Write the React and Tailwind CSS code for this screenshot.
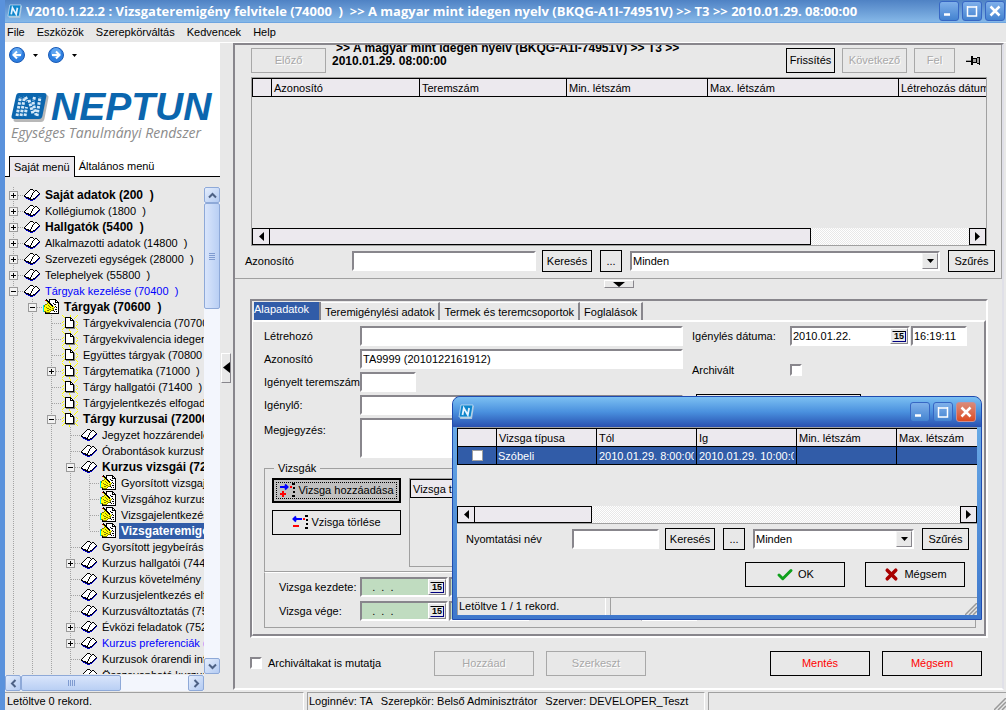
import { Check, X } from 'lucide-react';

const TREE = [
  { level: 0, icon: 'book', text: 'Saját adatok (200  )', toggle: '+', bold: true },
  { level: 0, icon: 'book', text: 'Kollégiumok (1800  )', toggle: '+' },
  { level: 0, icon: 'book', text: 'Hallgatók (5400  )', toggle: '+', bold: true },
  { level: 0, icon: 'book', text: 'Alkalmazotti adatok (14800  )', toggle: '+' },
  { level: 0, icon: 'book', text: 'Szervezeti egységek (28000  )', toggle: '+' },
  { level: 0, icon: 'book', text: 'Telephelyek (55800  )', toggle: '+' },
  { level: 0, icon: 'book', text: 'Tárgyak kezelése (70400  )', toggle: '-', blue: true },
  { level: 1, icon: 'hand', text: 'Tárgyak (70600  )', toggle: '-', bold: true },
  { level: 2, icon: 'page', text: 'Tárgyekvivalencia (70700  )' },
  { level: 2, icon: 'page', text: 'Tárgyekvivalencia idegen' },
  { level: 2, icon: 'page', text: 'Együttes tárgyak (70800  )' },
  { level: 2, icon: 'page', text: 'Tárgytematika (71000  )', toggle: '+' },
  { level: 2, icon: 'page', text: 'Tárgy hallgatói (71400  )' },
  { level: 2, icon: 'page', text: 'Tárgyjelentkezés elfogadása' },
  { level: 2, icon: 'page', text: 'Tárgy kurzusai (72000  )', toggle: '-', bold: true },
  { level: 3, icon: 'book', text: 'Jegyzet hozzárendelés' },
  { level: 3, icon: 'book', text: 'Órabontások kurzushoz' },
  { level: 3, icon: 'book', text: 'Kurzus vizsgái (72', toggle: '-', bold: true },
  { level: 4, icon: 'hand', text: 'Gyorsított vizsgajelentkezés' },
  { level: 4, icon: 'hand', text: 'Vizsgához kurzus' },
  { level: 4, icon: 'hand', text: 'Vizsgajelentkezés' },
  { level: 4, icon: 'hand', text: 'Vizsgateremigény', bold: true, selected: true, last: true },
  { level: 3, icon: 'book', text: 'Gyorsított jegybeírás' },
  { level: 3, icon: 'book', text: 'Kurzus hallgatói (74400  )', toggle: '+' },
  { level: 3, icon: 'book', text: 'Kurzus követelmény e' },
  { level: 3, icon: 'book', text: 'Kurzusjelentkezés elfogadása' },
  { level: 3, icon: 'book', text: 'Kurzusváltoztatás (75' },
  { level: 3, icon: 'book', text: 'Évközi feladatok (752', toggle: '+' },
  { level: 3, icon: 'book', text: 'Kurzus preferenciák (', toggle: '+', blue: true },
  { level: 3, icon: 'book', text: 'Kurzusok órarendi információi' },
  { level: 3, icon: 'book', text: 'Összevonható kurzusok' },
];

const PALETTE = { K: '#000000', W: '#ffffff', B: '#0000c8', Y: '#ffff00', G: '#808080', C: '#00e5ee', O: '#808000', R: '#d00000' };

// 16x16 tree glyphs, one letter per pixel
const GLYPHS = {
  book: [
    '................',
    '................',
    '......KKK.......',
    '.....KWWWK.KK...',
    '....KWWWWWKWWK..',
    '...KWWWWWKWWWWK.',
    '..KWWWWWKWWWWWWK',
    '.KWWWWWWKWWWWWKB',
    'KWWWWWWKWWWWWKB.',
    'KKWWWWWKWWWWKB..',
    '.BKKKWKWWWWKB...',
    '..BBKKKWWKKB....',
    '....BBKKKBB.....',
    '......BBB.......',
    '................',
    '................',
  ],
  page: [
    'Y.......Y......Y',
    '.Y......Y.....Y.',
    '..YKKKKKK....Y..',
    '...KWWWWKK..Y...',
    '...KWWWWKWK.....',
    '...KWWWWKKKK....',
    '.Y.KWWWWWWWKG.Y.',
    'Y..KWWWWWWWKG..Y',
    '...KWWWWWWWKG...',
    '.Y.KWWWWWWWKG..Y',
    'Y..KWWWWWWWKG.Y.',
    '...KWWWWWWWKG...',
    '..YKKKKKKKKKGY..',
    '.Y..GGGGGGGGG.Y.',
    'Y......Y.......Y',
    '.......Y........',
  ],
  hand: [
    '...K..KKKKKKK...',
    '..RKK.KWWWWWKK..',
    '...YKKKWWWWWKWK.',
    '....YKKWWWWWKKKK',
    '....OYKKWWKWWWWK',
    '..OOYYYKKWWKKWWK',
    'COYYYOYYKKWWWWWK',
    'COYYYYOYYKYWKWWK',
    'CYYOYYYOYYYOWKWK',
    'CYYYOOYYYOOWWWWK',
    'CYYYYYOOYYOWKKWK',
    'CYYYOOYYOOKWWWWK',
    'COOYYYYOWWWKWKWK',
    '..KOOOOWWWWWWWWK',
    '..KKKKKKKKKKKKKK',
    '................',
  ],
};

const Glyph = ({ name }) => (
  <svg width="16" height="16" viewBox="0 0 16 16" shapeRendering="crispEdges" className="block shrink-0">
    {GLYPHS[name].map((row, y) =>
      [...row].map((c, x) => c !== '.' && <rect key={`${x}-${y}`} x={x} y={y} width="1" height="1" fill={PALETTE[c]} />)
    )}
  </svg>
);

const Guide = ({ own, last, toggle }) => (
  <svg width="19" height="16" viewBox="0 0 19 16" className="block shrink-0">
    <path d={last ? 'M8.500 0v8' : 'M8.500 0v16'} stroke="#a4a4a4" strokeDasharray="1 1" />
    {own && <path d="M9 8.500h10" stroke="#a4a4a4" strokeDasharray="1 1" />}
    {toggle && (
      <>
        <rect x="4.500" y="4.500" width="8" height="8" fill="#f2f2f2" stroke="#9a9a9a" />
        <path d={toggle === '+' ? 'M6 8.500h5M8.500 6v5' : 'M6 8.500h5'} stroke="#000" />
      </>
    )}
  </svg>
);

const TreeRow = ({ item }) => {
  const guides = Array.from({ length: item.level + 1 }, (_, i) => i);
  return (
    <li className="flex h-4 items-center">
      {guides.map((i) => (
        <Guide
          key={i}
          own={i === item.level}
          last={i === item.level && item.last}
          toggle={i === item.level ? item.toggle : null}
        />
      ))}
      <Glyph name={item.icon} />
      <span
        className={`ml-[3px] whitespace-pre px-0.5 leading-4 ${item.bold ? 'text-[12px] font-bold' : 'text-[11px]'} ${item.blue ? 'text-[#0000ff]' : ''} ${item.selected ? 'bg-[#315ca8] text-white' : ''}`}
      >
        {item.text}
      </span>
    </li>
  );
};

const XpScrollButton = ({ label, d }) => (
  <button aria-label={label} className="flex h-4 w-4 shrink-0 items-center justify-center rounded-[2px] border border-[#8ea9d8] bg-linear-to-br from-[#e4edfc] to-[#b4cbf2]">
    <svg width="9" height="9" viewBox="0 0 9 9">
      <path d={d} fill="none" stroke="#4d6185" strokeWidth="2" />
    </svg>
  </button>
);

const NeptunBadge = ({ size }) => (
  <svg width={size} height={size} viewBox="0 0 16 16" className="shrink-0">
    <path d="M4 2h12l-2 13H2z" fill="#a9c4dc" />
    <path d="M3 1h12l-2 12H1z" fill="#0e86cc" stroke="#d5e8f7" strokeWidth=".7" />
    <path d="M4.500 11l1.300-7 4 7 1.300-7" fill="none" stroke="#e6f3ff" strokeWidth="1.800" />
  </svg>
);

const LogoMark = () => (
  <svg width="38" height="31" viewBox="0 0 38 31" className="shrink-0">
    <path d="M9 3h26q3 0 2.400 3l-4 21q-.6 3-3.500 3H5q-3 0-2.400-3L6 6q.6-3 3-3z" fill="#b8b8b8" />
    <path d="M8 1h25q3 0 2.400 3l-4 20q-.6 3-3.500 3H3q-3 0-2.400-3L5 4q.6-3 3-3z" fill="#0b66ae" />
    <path d="M6 24 9.500 5M10 24 13.500 5M14 24 15.500 15M14.500 5l2 4M18 8l4 14M22 10l3 13M23.500 5 22.500 9M26 24 29 5" stroke="#d4e8f8" strokeWidth="3" strokeDasharray="2.600 1.200" fill="none" />
  </svg>
);

const NavArrow = ({ label, d }) => (
  <button aria-label={label} className="flex items-center gap-2">
    <svg width="16" height="16" viewBox="0 0 16 16">
      <circle cx="8" cy="8" r="7.500" fill="#2f7fe0" stroke="#1b5bb5" />
      <circle cx="8" cy="6" r="5" fill="#5ea4f0" />
      <path d={d} fill="none" stroke="#fff" strokeWidth="2" />
    </svg>
    <svg width="5" height="3" viewBox="0 0 5 3">
      <path d="M0 0h5L2.500 3z" />
    </svg>
  </button>
);

const Sidebar = () => (
  <aside className="flex w-[215px] shrink-0 flex-col">
    <div className="flex flex-col bg-white">
      <div className="flex gap-2.5 px-1 pt-1">
        <NavArrow label="Vissza" d="M12 8H5M8 4.500 4.500 8 8 11.500" />
        <NavArrow label="Előre" d="M4 8h7M8 4.500 11.500 8 8 11.500" />
      </div>
      <div className="px-1.5 pt-6">
        <div className="flex items-center gap-0.5">
          <LogoMark />
          <span className="text-[39px] leading-10 font-bold text-[#0b66ae] italic">NEPTUN</span>
        </div>
        <p className="font-['Open_Sans',sans-serif] text-[14px] leading-3 whitespace-nowrap text-[#8c8c8c] italic">
          Egységes Tanulmányi Rendszer
        </p>
      </div>
      <div className="mt-[17px] flex border-b border-black pl-1 text-[11px]">
        <button className="-mb-px border border-b-0 border-black bg-[#ece9ee] px-1 py-0.5 leading-4">Saját menü</button>
        <button className="px-1 py-0.5 leading-4">Általános menü</button>
      </div>
    </div>
    <div className="flex min-h-0 flex-1 pt-2.5">
      <ul className="min-w-0 flex-1 overflow-hidden">
        {TREE.map((item) => (
          <TreeRow key={item.text} item={item} />
        ))}
      </ul>
      <div className="flex w-4 shrink-0 flex-col bg-[#f3f6fd]">
        <XpScrollButton label="Fel" d="M1 6.500 4.500 3 8 6.500" />
        <div className="flex h-[106px] flex-col items-center justify-center gap-px rounded-[2px] border border-[#8ea9d8] bg-linear-to-r from-[#d9e5fb] to-[#b9cff4]">
          <i className="h-px w-1.5 bg-[#7f9bd0]" />
          <i className="h-px w-1.5 bg-[#7f9bd0]" />
          <i className="h-px w-1.5 bg-[#7f9bd0]" />
          <i className="h-px w-1.5 bg-[#7f9bd0]" />
        </div>
        <div className="flex-1" />
        <XpScrollButton label="Le" d="M1 2.500 4.500 6 8 2.500" />
      </div>
    </div>
    <div className="flex h-[18px] items-center">
      <div className="flex flex-1 bg-[#f3f6fd]">
        <XpScrollButton label="Balra" d="M6.500 1 3 4.500 6.500 8" />
        <div className="flex w-[100px] items-center justify-center gap-px rounded-[2px] border border-[#8ea9d8] bg-linear-to-b from-[#d9e5fb] to-[#b9cff4]">
          <i className="h-1.5 w-px bg-[#7f9bd0]" />
          <i className="h-1.5 w-px bg-[#7f9bd0]" />
          <i className="h-1.5 w-px bg-[#7f9bd0]" />
          <i className="h-1.5 w-px bg-[#7f9bd0]" />
        </div>
        <div className="flex-1" />
        <XpScrollButton label="Jobbra" d="M2.500 1 6 4.500 2.500 8" />
      </div>
      <div className="w-4" />
    </div>
  </aside>
);

const FlatButton = ({ children, className = '', ...props }) => (
  <button
    className={`flex shrink-0 items-center justify-center border border-black disabled:border-[#a8a8a8] disabled:text-[#a8a8a8] disabled:[text-shadow:1px_1px_0_#fff] ${className}`}
    {...props}
  >
    {children}
  </button>
);

const SUNKEN = 'border-2 border-[#88868c] border-r-white border-b-white bg-white';

const TextInput = ({ className = '', ...props }) => (
  <input type="text" className={`h-5 px-px outline-none ${SUNKEN} ${className}`} {...props} />
);

const SelectBox = ({ label, className = '' }) => (
  <div className={`relative ${className}`}>
    <select aria-label={label} className={`h-5 w-full appearance-none px-px outline-none ${SUNKEN}`}>
      <option>Minden</option>
    </select>
    <span className="pointer-events-none absolute inset-y-0.5 right-0.5 flex w-4 items-center justify-center border border-[#f5f5f5] border-r-[#88868c] border-b-[#88868c] bg-[#e8e8e8]">
      <svg width="7" height="4" viewBox="0 0 7 4">
        <path d="M0 0h7L3.500 4z" />
      </svg>
    </span>
  </div>
);

const DateInput = ({ className = '', inputClass = '', ...props }) => (
  <div className={`flex h-5 ${SUNKEN} ${className}`}>
    <input type="text" className={`w-0 flex-1 px-px outline-none ${inputClass}`} {...props} />
    <button aria-label="Naptár" className="flex w-[18px] items-center justify-center border border-white border-r-[#88868c] border-b-[#88868c] bg-[#e8e8e8]">
      <span className="border border-t-black border-r-[#000080] border-b-[#000080] border-l-transparent px-px text-[9px] leading-[9px] font-bold">15</span>
    </button>
  </div>
);

const FlatScrollbar = ({ thumbClass }) => (
  <div className="flex h-[17px] bg-[repeating-conic-gradient(#fff_0_25%,#e8e8e8_0_50%)] bg-[length:2px_2px]">
    <button aria-label="Görgetés balra" className="flex w-[18px] items-center justify-center border border-black bg-[#ece9ee]">
      <svg width="5" height="9" viewBox="0 0 5 9">
        <path d="M5 0v9L0 4.500z" />
      </svg>
    </button>
    <div className={`border border-l-0 border-black bg-[#ece9ee] ${thumbClass}`} />
    <div className="flex-1" />
    <button aria-label="Görgetés jobbra" className="flex w-[17px] items-center justify-center border border-black bg-[#ece9ee]">
      <svg width="5" height="9" viewBox="0 0 5 9">
        <path d="M0 0v9l5-4.500z" />
      </svg>
    </button>
  </div>
);

const HeadCell = ({ children, className = '' }) => (
  <th className={`h-[18px] overflow-hidden border border-t-0 border-r-0 border-black bg-[#ece9ee] px-0.5 text-left font-normal whitespace-nowrap first:border-l-0 ${className}`}>
    {children}
  </th>
);

const RoomGrid = () => (
  <div className="flex h-[169px] flex-col border border-[#a0a0a0]">
    <div className="flex-1 overflow-hidden">
      <table className="w-full table-fixed border-collapse border-t border-l border-black leading-4">
        <thead>
          <tr>
            <HeadCell className="w-[19px]" />
            <HeadCell className="w-[148px]">Azonosító</HeadCell>
            <HeadCell className="w-[147px]">Teremszám</HeadCell>
            <HeadCell className="w-[141px]">Min. létszám</HeadCell>
            <HeadCell className="w-[191px]">Max. létszám</HeadCell>
            <HeadCell>Létrehozás dátuma</HeadCell>
          </tr>
        </thead>
      </table>
    </div>
    <FlatScrollbar thumbClass="w-[541px]" />
  </div>
);

const SearchRow = ({ label, id, className = '', labelClass, inputClass, selectClass, autoFocus }) => (
  <div className={`flex items-center ${className}`}>
    <label htmlFor={id} className={`shrink-0 ${labelClass}`}>{label}</label>
    <TextInput id={id} className={inputClass} autoFocus={autoFocus} />
    <FlatButton className="ml-1.5 h-[22px] w-[50px]">Keresés</FlatButton>
    <FlatButton className="ml-2 h-[22px] w-[22px]">...</FlatButton>
    <SelectBox label={`${label} szűrő`} className={`ml-2 ${selectClass}`} />
    <FlatButton className="ml-2 h-[22px] w-[47px]">Szűrés</FlatButton>
  </div>
);

const UpperPanel = () => (
  <section className="border-r border-b border-[#a0a0a0] pb-1.5">
    <div className="flex items-center pr-5 pl-4">
      <FlatButton disabled className="mt-[3px] h-[25px] w-[75px] self-start">Előző</FlatButton>
      <div className="ml-1.5 flex h-8 w-[360px] flex-col justify-end overflow-hidden pb-[9px] text-[12px] leading-[13px] font-bold">
        <p className="pl-1">&gt;&gt; A magyar mint idegen nyelv (BKQG-A1I-74951V) &gt;&gt; T3 &gt;&gt;</p>
        <p>2010.01.29. 08:00:00</p>
      </div>
      <div className="mt-[3px] ml-auto flex items-center gap-[7px] self-start">
        <FlatButton className="h-[25px] w-[49px]">Frissítés</FlatButton>
        <FlatButton disabled className="h-[25px] w-[65px]">Következő</FlatButton>
        <FlatButton disabled className="h-[25px] w-[41px]">Fel</FlatButton>
        <button aria-label="Rögzítés" className="ml-1">
          <svg width="15" height="9" viewBox="0 0 15 9" shapeRendering="crispEdges">
            <path d="M5 0h2v9H5zM7 2h3v1H7zM7 6h3v1H7zM10 2h1v5h-1zM11 1h2v1h-2zM11 7h2v1h-2zM13 1h1v8h-1zM0 4h5v2H0z" />
            <path d="M7 3h3v3H7zM11 2h2v5h-2z" fill="#a0a0a0" />
            <path d="M0 4h5v1H0z" fill="#a0a0a0" />
          </svg>
        </button>
      </div>
    </div>
    <div className="pr-3.5 pl-4">
      <RoomGrid />
    </div>
    <SearchRow
      label="Azonosító"
      id="room-id"
      className="mt-1 pr-1.5 pl-2.5"
      labelClass="w-[107px]"
      inputClass="w-[184px]"
      selectClass="flex-1"
    />
  </section>
);

const TABS = ['Alapadatok', 'Teremigénylési adatok', 'Termek és teremcsoportok', 'Foglalások'];

const ExamIcon = ({ add }) => (
  <svg width="17" height="15" viewBox="0 0 17 15" className="shrink-0">
    <path d={add ? 'M1 4h8M6 1.500 8.500 4 6 6.500' : 'M1 4h9M4 1.500 1.500 4 4 6.500'} fill="none" stroke="#0000ff" strokeWidth="2" />
    <path d={add ? 'M1 11h6M4 8v6' : 'M1 11h6'} stroke="#ff0000" strokeWidth="2" />
    <path d="M11 3h2v2h-2z" fill="#ff0000" />
    <path d="M13 0h3v2h-3zM14 4h2v2h-2zM14 8h2v2h-2zM13 12h3v2h-3z" />
  </svg>
);

const FormPanel = () => (
  <section className="mr-3.5 ml-[15px] flex min-h-0 flex-1 flex-col border-2 border-[#88868c] border-r-white border-b-white">
    <div className="flex items-end pt-px pl-0.5">
      {TABS.map((tab, i) => (
        <button
          key={tab}
          className={
            i === 0
              ? 'w-[67px] border-r-2 border-[#88868c] bg-[#315ca8] pb-1 text-left leading-[14px] text-white'
              : 'border-t border-r-2 border-white border-r-[#88868c] px-1 pt-px leading-4'
          }
        >
          {tab}
        </button>
      ))}
    </div>
    <div className="flex flex-1 flex-col overflow-hidden border-t-2 border-r-2 border-b-2 border-l border-white border-r-[#88868c] border-b-[#88868c] pr-2 pb-1.5 pl-[11px]">
      <div className="flex pt-1">
        <div className="grid w-[419px] grid-cols-[96px_1fr] items-center gap-y-[3px]">
          <label htmlFor="creator">Létrehozó</label>
          <TextInput id="creator" />
          <label htmlFor="ident">Azonosító</label>
          <TextInput id="ident" defaultValue="TA9999 (2010122161912)" />
          <label htmlFor="rooms" className="whitespace-nowrap">Igényelt teremszám:</label>
          <TextInput id="rooms" className="w-14" />
          <label htmlFor="requester">Igénylő:</label>
          <TextInput id="requester" />
          <label htmlFor="note" className="self-start pt-1">Megjegyzés:</label>
          <textarea id="note" className={`block h-10 w-full resize-none ${SUNKEN}`} />
        </div>
        <div className="flex-1 pl-[9px]">
          <div className="flex h-5 items-center">
            <label htmlFor="req-date" className="w-[98px]">Igénylés dátuma:</label>
            <DateInput id="req-date" defaultValue="2010.01.22." className="w-[120px]" />
            <TextInput aria-label="Igénylés ideje" defaultValue="16:19:11" className="ml-px w-14" />
          </div>
          <div className="mt-4 flex h-4 items-center">
            <label htmlFor="archived" className="w-[98px]">Archivált</label>
            <input id="archived" type="checkbox" className={`h-3 w-3 appearance-none ${SUNKEN}`} />
          </div>
          <FlatButton className="mt-4 ml-1 h-6 w-[165px]" aria-label="Kiválasztás" />
        </div>
      </div>
      <fieldset className="mt-1 flex gap-2 border border-[#a0a0a0] px-[7px] pb-1">
        <legend className="ml-0.5 px-1 leading-3">Vizsgák</legend>
        <div className="flex w-[129px] shrink-0 flex-col gap-[7px] pt-1">
          <FlatButton className="h-[25px] border-2 bg-[#c0c0c0] p-0.5">
            <span className="flex h-full flex-1 items-center justify-center gap-0.5 border border-dotted border-black whitespace-nowrap">
              <ExamIcon add />
              Vizsga hozzáadása
            </span>
          </FlatButton>
          <FlatButton className="h-[25px] gap-0.5">
            <ExamIcon />
            Vzisga törlése
          </FlatButton>
        </div>
        <div className="mt-1 h-[89px] min-w-0 flex-1 overflow-hidden border border-[#a0a0a0]">
          <table className="w-full table-fixed border-collapse border border-black leading-4">
            <thead>
              <tr>
                <HeadCell>Vizsga típusa</HeadCell>
              </tr>
            </thead>
          </table>
        </div>
      </fieldset>
      <div className="flex flex-1 flex-col gap-1 border border-[#a0a0a0] border-t-white pt-1 pl-3.5">
        <div className="flex items-center">
          <label htmlFor="exam-start" className="w-[81px] whitespace-nowrap">Vizsga kezdete:</label>
          <DateInput id="exam-start" defaultValue="   .  .  ." className="w-[88px]" inputClass="bg-[#c0dcc0]" />
          <TextInput aria-label="Vizsga kezdetének ideje" className="ml-px w-20 bg-[#c0dcc0]!" />
        </div>
        <div className="flex items-center">
          <label htmlFor="exam-end" className="w-[81px] whitespace-nowrap">Vizsga vége:</label>
          <DateInput id="exam-end" defaultValue="   .  .  ." className="w-[88px]" inputClass="bg-[#c0dcc0]" />
          <TextInput aria-label="Vizsga végének ideje" className="ml-px w-20 bg-[#c0dcc0]!" />
          <TextInput aria-label="Létszám" className="ml-28 w-14" />
        </div>
      </div>
    </div>
  </section>
);

const ActionBar = () => (
  <div className="flex h-[50px] shrink-0 items-center pr-5 pl-[15px]">
    <label className="flex flex-1 items-center gap-1.5">
      <input type="checkbox" className={`h-3 w-3 appearance-none ${SUNKEN}`} />
      Archiváltakat is mutatja
    </label>
    <div className="flex gap-3">
      <FlatButton disabled className="h-[25px] w-[100px]">Hozzáad</FlatButton>
      <FlatButton disabled className="h-[25px] w-[100px]">Szerkeszt</FlatButton>
    </div>
    <div className="ml-[124px] flex gap-3 text-[#ff0000]">
      <FlatButton className="h-[25px] w-[100px]">Mentés</FlatButton>
      <FlatButton className="h-[25px] w-[100px]">Mégsem</FlatButton>
    </div>
  </div>
);

const WINDOW_GLYPHS = {
  min: 'M4 12.500h6',
  max: 'M4 5h10M4.500 4v10h9V4',
  close: 'M4.500 4.500l9 9M13.500 4.500l-9 9',
};

const WindowButton = ({ label, glyph, red }) => (
  <button
    aria-label={label}
    className={`flex h-5 w-5 items-center justify-center rounded-[3px] border ${red ? 'border-[#c98e94] bg-linear-to-b from-[#d98a78] to-[#dd4a1c]' : 'border-[#3767c4] bg-linear-to-b from-[#7fb0ea] to-[#4383d0]'}`}
  >
    <svg width="18" height="18" viewBox="0 0 18 18">
      <path d={WINDOW_GLYPHS[glyph]} fill="none" stroke="#fff" strokeWidth={glyph === 'max' ? 1.5 : 2.5} />
    </svg>
  </button>
);

const Grip = () => (
  <svg width="12" height="12" viewBox="0 0 12 12" className="shrink-0 self-end">
    <path d="M0 12 12 0M4 12l8-8M8 12l4-4" stroke="#999" strokeWidth="1.500" />
  </svg>
);

const ExamDialog = () => (
  <div role="dialog" aria-label="Vizsga kiválasztása" className="absolute top-[396px] left-[447px] w-[530px] rounded-t-lg border border-[#1f4bb0] bg-linear-to-b from-[#6fb0ea] to-[#3f78cc] px-1 pb-1">
    <div className="-mx-1 flex h-[30px] items-center gap-[3px] rounded-t-lg bg-linear-to-b from-[#7cc0f2] via-[#4a90de] to-[#2a50b0] pr-[5px] pl-[5px]">
      <NeptunBadge size={16} />
      <div className="flex-1" />
      <WindowButton label="Kis méret" glyph="min" />
      <WindowButton label="Teljes méret" glyph="max" />
      <WindowButton label="Bezárás" glyph="close" red />
    </div>
    <div className="bg-[#e8e8e8]">
      <div className="flex h-[97px] flex-col border border-r-0 border-l-0 border-[#a0a0a0]">
        <div className="flex-1 overflow-hidden">
          <table className="w-full table-fixed border-collapse border-t border-l border-black leading-4">
            <thead>
              <tr>
                <HeadCell className="w-[39px]" />
                <HeadCell className="w-[100px]">Vizsga típusa</HeadCell>
                <HeadCell className="w-[100px]">Tól</HeadCell>
                <HeadCell className="w-[100px]">Ig</HeadCell>
                <HeadCell className="w-[100px]">Min. létszám</HeadCell>
                <HeadCell>Max. létszám</HeadCell>
              </tr>
            </thead>
            <tbody>
              <tr className="bg-[#315ca8] text-white">
                <td className="h-[18px] border-b border-black">
                  <input type="checkbox" aria-label="Szóbeli kijelölése" className="mx-auto block h-[11px] w-[11px] appearance-none border border-[#a0a0a0] bg-white" />
                </td>
                <td className="overflow-hidden border-b border-l border-black px-px whitespace-nowrap">Szóbeli</td>
                <td className="border-b border-l border-black px-0.5 whitespace-nowrap">
                  <span className="block overflow-hidden">2010.01.29. 8:00:00</span>
                </td>
                <td className="border-b border-l border-black px-0.5 whitespace-nowrap">
                  <span className="block overflow-hidden">2010.01.29. 10:00:00</span>
                </td>
                <td className="border-b border-l border-black" />
                <td className="border-b border-l border-black" />
              </tr>
            </tbody>
          </table>
        </div>
        <FlatScrollbar thumbClass="w-[117px]" />
      </div>
      <SearchRow
        label="Nyomtatási név"
        id="print-name"
        className="mt-1 pr-2 pl-[9px]"
        labelClass="w-[106px]"
        inputClass="w-[87px]"
        selectClass="flex-1"
        autoFocus
      />
      <div className="mt-3 flex justify-end gap-5 pr-3">
        <FlatButton className="h-[25px] w-[100px] gap-1">
          <Check size={18} strokeWidth={4} color="#0fa01c" />
          OK
        </FlatButton>
        <FlatButton className="h-[25px] w-[100px] gap-1">
          <X size={17} strokeWidth={5} color="#a80000" />
          Mégsem
        </FlatButton>
      </div>
      <div className="mt-2.5 flex h-[18px] gap-1 border-t border-[#a0a0a0]">
        <div className="w-[149px] border-r border-l border-[#a0a0a0] border-r-white pl-px leading-4">Letöltve 1 / 1 rekord.</div>
        <div className="flex-1 border-l border-[#a0a0a0]" />
        <Grip />
      </div>
    </div>
  </div>
);

const MENU = ['File', 'Eszközök', 'Szerepkörváltás', 'Kedvencek', 'Help'];

const StatusBar = () => (
  <footer className="flex h-[18px] shrink-0 gap-[3px] leading-4">
    <div className="w-[299px] border-t border-r border-[#a0a0a0] border-r-white pl-0.5">Letöltve 0 rekord.</div>
    <div className="flex flex-1 gap-2 border-t border-r border-l border-[#a0a0a0] border-r-white pl-px whitespace-nowrap">
      <span>Loginnév: TA</span>
      <span>Szerepkör: Belső Adminisztrátor</span>
      <span>Szerver: DEVELOPER_Teszt</span>
    </div>
    <div className="flex w-[298px] justify-end border-t border-l border-[#a0a0a0]">
      <Grip />
    </div>
  </footer>
);

export default function App() {
  return (
    <div className="relative flex h-screen flex-col overflow-hidden border-l-[5px] border-[#5a92dc] bg-[#e8e8e8] font-['Liberation_Sans',Arial,sans-serif] text-[11px] text-black">
      <header className="flex h-[23px] shrink-0 items-center gap-1 border-b border-[#6ea5e0] bg-linear-to-b from-[#4f82c4] to-[#86b8e8] pr-px pl-0.5">
        <NeptunBadge size={15} />
        <h1 className="flex-1 overflow-hidden font-['Open_Sans',sans-serif] text-[13px] leading-5 font-bold whitespace-pre text-white">
          V2010.1.22.2 : Vizsgateremigény felvitele (74000  )  &gt;&gt; A magyar mint idegen nyelv (BKQG-A1I-74951V) &gt;&gt; T3 &gt;&gt; 2010.01.29. 08:00:00
        </h1>
        <div className="flex gap-[3px]">
          <WindowButton label="Kis méret" glyph="min" />
          <WindowButton label="Teljes méret" glyph="max" />
          <WindowButton label="Bezárás" glyph="close" />
        </div>
      </header>
      <nav className="flex h-5 shrink-0 items-center gap-3 border-b border-white pl-0.5">
        {MENU.map((entry) => (
          <button key={entry}>{entry}</button>
        ))}
      </nav>
      <main className="flex min-h-0 flex-1">
        <Sidebar />
        <div className="flex w-[13px] shrink-0 items-center">
          <button aria-label="Menü elrejtése" className="ml-px flex h-[30px] w-2.5 items-center justify-center border border-white border-r-[#88868c] border-b-[#88868c]">
            <svg width="7" height="11" viewBox="0 0 7 11">
              <path d="M7 0v11L0 5.500z" />
            </svg>
          </button>
        </div>
        <div className="mr-0.5 mb-0.5 flex min-w-0 flex-1 flex-col border-2 border-[#88868c] border-r-[#e0e0e8] border-b-white">
          <UpperPanel />
          <div className="flex h-5 shrink-0 justify-center pt-px">
            <button aria-label="Felső panel elrejtése" className="flex h-2 w-[30px] items-center justify-center border border-white border-r-[#88868c] border-b-[#88868c]">
              <svg width="12" height="5" viewBox="0 0 12 5">
                <path d="M0 0h12L6 5z" />
              </svg>
            </button>
          </div>
          <FormPanel />
          <ActionBar />
        </div>
      </main>
      <StatusBar />
      <ExamDialog />
    </div>
  );
}
